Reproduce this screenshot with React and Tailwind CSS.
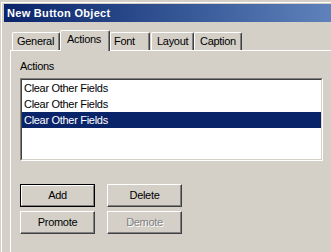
const tabs = [
  { label: 'General', w: 'w-[48px]', pl: 'pl-[4px]' },
  { label: 'Actions', w: 'w-[50px]', pl: 'pl-[6px]', active: true },
  { label: 'Font', w: 'w-[40px]', pl: 'pl-[3px]' },
  { label: 'Layout', w: 'w-[43px] ml-[1px]', pl: 'pl-[5px]' },
  { label: 'Caption', w: 'w-[48px]', pl: 'pl-[5px]' },
];

const items = ['Clear Other Fields', 'Clear Other Fields', 'Clear Other Fields'];

function Button({ children, isDefault, disabled }) {
  if (isDefault) {
    return (
      <div className="w-[75px] h-[23px] border border-black">
        <div className="h-full border-t border-l border-white border-b border-r border-b-[#808080] border-r-[#808080] flex items-center justify-center text-black">
          {children}
        </div>
      </div>
    );
  }
  return (
    <div className="w-[75px] h-[23px] border border-white border-b-[#404040] border-r-[#404040] shadow-[inset_-1px_-1px_0_#808080] flex items-center justify-center">
      <span className={disabled ? 'text-[#808080] [text-shadow:1px_1px_0_#fff]' : 'text-black'}>{children}</span>
    </div>
  );
}

export default function App() {
  return (
    <div className="w-[331px] h-[252px] overflow-hidden bg-[#d4d0c8] pt-[2px] pl-[1px] font-['Liberation_Sans',Arial,sans-serif] text-[11px] leading-[13px] tracking-[-0.3px] text-black">
      <div className="h-full border-t border-l border-white pt-[1px] pl-[2px]">
        {/* Title bar */}
        <div className="h-[18px] flex items-center pl-[3px] bg-gradient-to-r from-[#0a246a] to-[#5f82bb]">
          <span className="font-bold text-white tracking-[0.3px]">New Button Object</span>
        </div>

        {/* Tab strip */}
        <div className="relative z-10 mt-[8px] h-[20px] pl-[8px] flex items-end">
          {tabs.map(t => (
            <div
              key={t.label}
              className={`${t.w} ${t.pl} pt-[2px] rounded-t-[2px] bg-[#d4d0c8] border-t border-l border-r border-white border-r-[#404040] shadow-[inset_-1px_0_0_#808080] ${
                t.active ? 'h-[21px] -mb-[1px] relative z-10' : 'h-[18px]'
              }`}
            >
              {t.label}
            </div>
          ))}
        </div>

        {/* Panel */}
        <div className="ml-[6px] h-full border-t border-l border-white pt-[9px] pl-[9px]">
          <div>Actions</div>
          <div className="mt-[5px] w-[303px] h-[83px] border border-[#808080] border-b-white border-r-white">
            <div className="h-full border border-[#404040] border-b-[#d4d0c8] border-r-[#d4d0c8] bg-white">
              {items.map((it, i) => (
                <div
                  key={i}
                  className={`h-[16px] leading-[16px] pl-[2px] ${i === 2 ? 'bg-[#0a246a] text-white' : ''}`}
                >
                  {it}
                </div>
              ))}
            </div>
          </div>

          <div className="mt-[23px] flex gap-[12px]">
            <Button isDefault>Add</Button>
            <Button>Delete</Button>
          </div>
          <div className="mt-[4px] flex gap-[12px]">
            <Button>Promote</Button>
            <Button disabled>Demote</Button>
          </div>
        </div>
      </div>
    </div>
  );
}
